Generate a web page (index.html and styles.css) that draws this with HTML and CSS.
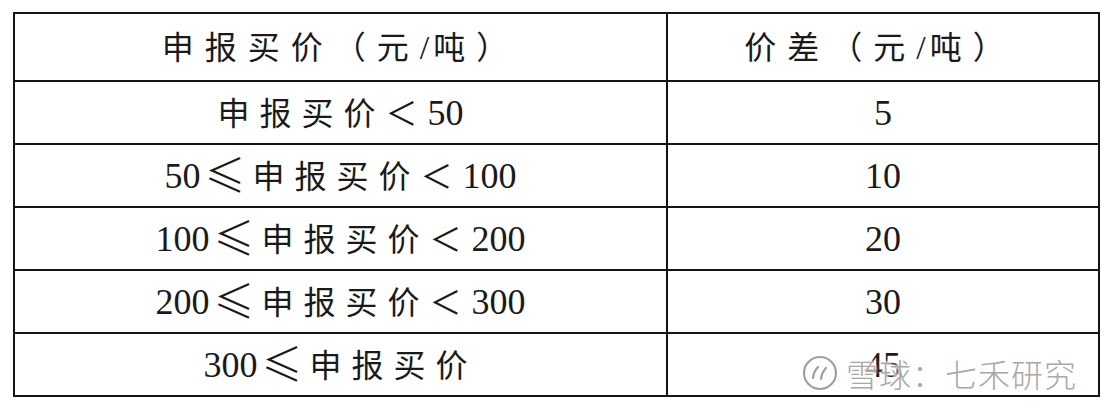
FILE: index.html
```html
<!DOCTYPE html>
<html lang="zh">
<head>
<meta charset="utf-8">
<link rel="stylesheet" href="styles.css">
</head>
<body>
<div class="page">
  <table class="grid">
    <tr class="head">
      <td class="c1"><span class="cjk">申报买价（元</span><span class="sl">/</span><span class="cjk">吨）</span></td>
      <td class="c2"><span class="cjk">价差（元</span><span class="sl">/</span><span class="cjk">吨）</span></td>
    </tr>
    <tr class="r">
      <td class="c1"><span class="cjk">申报买价＜</span><span class="num">50</span></td>
      <td class="c2"><span class="num">5</span></td>
    </tr>
    <tr class="r">
      <td class="c1"><span class="num">50</span><span class="sym">≤</span><span class="cjk">申报买价＜</span><span class="num">100</span></td>
      <td class="c2"><span class="num">10</span></td>
    </tr>
    <tr class="r">
      <td class="c1"><span class="num">100</span><span class="sym">≤</span><span class="cjk">申报买价＜</span><span class="num">200</span></td>
      <td class="c2"><span class="num">20</span></td>
    </tr>
    <tr class="r">
      <td class="c1"><span class="num">200</span><span class="sym">≤</span><span class="cjk">申报买价＜</span><span class="num">300</span></td>
      <td class="c2"><span class="num">30</span></td>
    </tr>
    <tr class="r last">
      <td class="c1"><span class="num">300</span><span class="sym">≤</span><span class="cjk">申报买价</span></td>
      <td class="c2"><span class="num">45</span></td>
    </tr>
  </table>
  <div class="watermark">
    <svg class="logo" width="36" height="40" viewBox="0 0 36 40">
      <circle cx="18" cy="20" r="16" fill="none" stroke="#a0a0a0" stroke-width="2.2"/>
      <path d="M11 25 Q11.5 19 16 14" fill="none" stroke="#a0a0a0" stroke-width="2.2" stroke-linecap="round"/>
      <path d="M19 26 Q19.5 20 24 15" fill="none" stroke="#a0a0a0" stroke-width="2.2" stroke-linecap="round"/>
    </svg>
    <span class="wm-text">雪球：七禾研究</span>
  </div>
</div>
</body>
</html>
```

FILE: styles.css
```css
html, body {
  margin: 0;
  padding: 0;
  background: #ffffff;
}
.page {
  position: relative;
  width: 1108px;
  height: 408px;
  padding: 12px 0 0 13px;
  box-sizing: border-box;
}
.grid {
  border-collapse: collapse;
  width: 1087px;
  table-layout: fixed;
  color: #1a1a1a;
}
.grid td {
  border: 2px solid #141414;
  text-align: center;
  vertical-align: middle;
  padding: 0;
  white-space: nowrap;
  line-height: 1;
}
.grid .c1 { width: 651px; }
.head td { height: 66px; font-size: 32px; }
.r td { height: 61px; font-size: 32px; }
.cjk {
  font-family: "Noto Sans CJK SC", sans-serif;
  font-weight: 400;
  letter-spacing: 10px;
}
.head .cjk { letter-spacing: 11px; }
.head .c2 { padding-right: 6px; }
.sym {
  display: inline-block;
  width: 32px;
  margin: 0 12px 0 8px;
  text-align: center;
  font-family: "Noto Sans CJK SC", sans-serif;
  font-weight: 300;
  font-size: 34px;
  transform: scale(1.2, 1.3);
}
.sl {
  font-family: "Liberation Serif", serif;
  font-size: 34px;
  letter-spacing: 4px;
}
.num {
  font-family: "Liberation Serif", serif;
  font-size: 36px;
  letter-spacing: 0;
}
.watermark {
  position: absolute;
  left: 802px;
  top: 350px;
  display: flex;
  align-items: center;
  gap: 8px;
}
.logo { display: block; }
.wm-text {
  font-family: "Noto Sans CJK SC", sans-serif;
  font-weight: 300;
  font-size: 32px;
  letter-spacing: 1px;
  color: #a8a8a8;
  text-shadow: 0 0 2px #fff, 0 0 3px #fff, 0 0 4px #fff;
}
```
